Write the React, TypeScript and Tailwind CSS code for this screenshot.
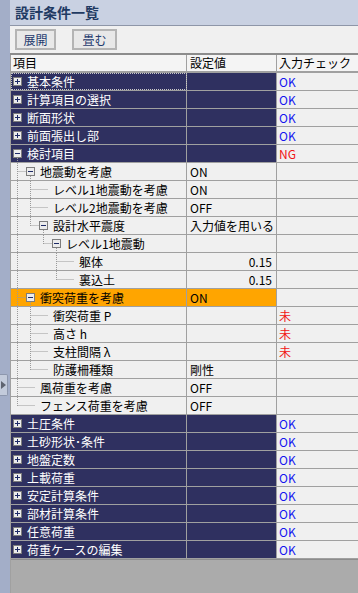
import React from 'react';

type Tone = 'dark' | 'light' | 'orange';

type Row = {
  label: string;
  level: number;
  box?: '+' | '-';
  last?: boolean;
  anc?: boolean[];
  open?: boolean;
  tone: Tone;
  value?: string;
  num?: boolean;
  check?: string;
};

const rows: Row[] = [
  { label: '基本条件', level: 0, box: '+', tone: 'dark', check: 'OK' },
  { label: '計算項目の選択', level: 0, box: '+', tone: 'dark', check: 'OK' },
  { label: '断面形状', level: 0, box: '+', tone: 'dark', check: 'OK' },
  { label: '前面張出し部', level: 0, box: '+', tone: 'dark', check: 'OK' },
  { label: '検討項目', level: 0, box: '-', open: true, tone: 'dark', check: 'NG' },
  { label: '地震動を考慮', level: 1, box: '-', open: true, tone: 'light', value: 'ON' },
  { label: 'レベル1地震動を考慮', level: 2, anc: [true], tone: 'light', value: 'ON' },
  { label: 'レベル2地震動を考慮', level: 2, anc: [true], tone: 'light', value: 'OFF' },
  { label: '設計水平震度', level: 2, box: '-', open: true, last: true, anc: [true], tone: 'light', value: '入力値を用いる' },
  { label: 'レベル1地震動', level: 3, box: '-', open: true, last: true, anc: [true, false], tone: 'light' },
  { label: '躯体', level: 4, anc: [true, false, false], tone: 'light', value: '0.15', num: true },
  { label: '裏込土', level: 4, last: true, anc: [true, false, false], tone: 'light', value: '0.15', num: true },
  { label: '衝突荷重を考慮', level: 1, box: '-', open: true, tone: 'orange', value: 'ON' },
  { label: '衝突荷重 P', level: 2, anc: [true], tone: 'light', check: '未' },
  { label: '高さ h', level: 2, anc: [true], tone: 'light', check: '未' },
  { label: '支柱間隔 λ', level: 2, anc: [true], tone: 'light', check: '未' },
  { label: '防護柵種類', level: 2, last: true, anc: [true], tone: 'light', value: '剛性' },
  { label: '風荷重を考慮', level: 1, tone: 'light', value: 'OFF' },
  { label: 'フェンス荷重を考慮', level: 1, last: true, tone: 'light', value: 'OFF' },
  { label: '土圧条件', level: 0, box: '+', tone: 'dark', check: 'OK' },
  { label: '土砂形状･条件', level: 0, box: '+', tone: 'dark', check: 'OK' },
  { label: '地盤定数', level: 0, box: '+', tone: 'dark', check: 'OK' },
  { label: '上載荷重', level: 0, box: '+', tone: 'dark', check: 'OK' },
  { label: '安定計算条件', level: 0, box: '+', tone: 'dark', check: 'OK' },
  { label: '部材計算条件', level: 0, box: '+', tone: 'dark', check: 'OK' },
  { label: '任意荷重', level: 0, box: '+', tone: 'dark', check: 'OK' },
  { label: '荷重ケースの編集', level: 0, box: '+', tone: 'dark', check: 'OK' },
];

const DOT = '#9a9a9a';

// dotted connectors + expand box, drawn in front of the label
function TreeGlyph({ row }: { row: Row }) {
  const L = row.level;
  const w = 16 + 13 * L;
  const bx = 2 + 13 * L;
  const lines: React.ReactNode[] = [];
  (row.anc || []).forEach((on, i) => {
    const x = 13 * (i + 1) - 7 + 0.5;
    if (on) lines.push(<line key={'a' + i} x1={x} y1={0} x2={x} y2={17} />);
  });
  if (L >= 1) {
    const x = 13 * L - 7 + 0.5;
    lines.push(<line key="v" x1={x} y1={0} x2={x} y2={row.last ? 9 : 17} />);
    lines.push(<line key="h" x1={x} y1={8.5} x2={row.box ? bx : bx + 9} y2={8.5} />);
  }
  if (row.open) {
    const x = bx + 4.5;
    lines.push(<line key="o" x1={x} y1={13} x2={x} y2={17} />);
  }
  return (
    <svg width={w} height={17} className="shrink-0">
      <g stroke={DOT} strokeWidth={1} strokeDasharray="1 1">
        {lines}
      </g>
      {row.box && (
        <g>
          <rect x={bx + 0.5} y={4.5} width={8} height={8} fill="#ececec" stroke="#7d7d7d" />
          <line x1={bx + 2} y1={8.5} x2={bx + 7} y2={8.5} stroke="#1d2a66" />
          {row.box === '+' && <line x1={bx + 4.5} y1={6} x2={bx + 4.5} y2={11} stroke="#1d2a66" />}
        </g>
      )}
    </svg>
  );
}

function TableRow({ row, focus }: { row: Row; focus?: boolean }) {
  const bg =
    row.tone === 'dark' ? 'bg-[#2f3060] text-white' : row.tone === 'orange' ? 'bg-[#ffa500] text-black' : 'bg-[#f0f0f0] text-black';
  const checkColor = row.check === 'OK' ? 'text-[#1414f0]' : 'text-[#f01414]';
  return (
    <div className="flex h-[18px] border-b border-[#a0a0a0]">
      <div
        className={`flex w-[176px] shrink-0 items-center border-r border-[#a0a0a0] ${bg} ${
          focus ? 'outline-1 outline-dotted -outline-offset-1 outline-[#c8c8c8]' : ''
        }`}
      >
        <TreeGlyph row={row} />
        <span className="whitespace-nowrap leading-none">{row.label}</span>
      </div>
      <div
        className={`flex w-[90px] shrink-0 items-center border-r border-[#a0a0a0] px-[3px] ${bg} ${
          row.num ? 'justify-end pr-[4px]' : ''
        }`}
      >
        <span className="whitespace-nowrap leading-none">{row.value}</span>
      </div>
      <div className={`flex flex-1 items-center bg-[#f0f0f0] pl-[2px] ${checkColor}`}>
        <span className="leading-none">{row.check}</span>
      </div>
    </div>
  );
}

export default function App() {
  return (
    <div className="relative flex h-[593px] w-[358px] overflow-hidden font-['Noto_Sans_CJK_JP',sans-serif] text-[12px]">
      {/* left splitter strip */}
      <div className="w-[10px] shrink-0 bg-[#a3aec8]" />
      <div className="absolute left-0 top-[374px] flex h-[22px] w-[8px] items-center justify-center rounded-r-[2px] border border-l-0 border-[#8d97ad] bg-[#c3cbdb]">
        <svg width="5" height="8">
          <path d="M0 0 L5 4 L0 8 Z" fill="#5f6470" />
        </svg>
      </div>

      <div className="flex min-w-0 flex-1 flex-col">
        {/* title */}
        <div className="flex h-[26px] shrink-0 items-center border-b border-[#8e96a8] bg-[#c9d1e2] pl-[5px]">
          <span className="text-[14px] font-bold text-[#1f3a62]">設計条件一覧</span>
        </div>

        {/* toolbar */}
        <div className="flex h-[29px] shrink-0 items-center gap-[16px] border-b-2 border-[#8c8c8c] bg-[#f0f0f0] pl-[5px]">
          <button className="flex h-[21px] w-[41px] items-center justify-center border-2 border-[#b4b4b4] bg-[#e8e8e8] text-[12px] text-[#1f3a6e]">
            展開
          </button>
          <button className="flex h-[21px] w-[45px] items-center justify-center border-2 border-[#b4b4b4] bg-[#e8e8e8] text-[12px] text-[#1f3a6e]">
            畳む
          </button>
        </div>

        {/* grid */}
        <div className="flex flex-1 flex-col border-l border-[#a0a0a0] bg-[#ababab]">
          <div className="flex h-[18px] shrink-0 border-b-2 border-[#a0a0a0] bg-[#f4f4f4] text-black">
            <div className="flex w-[176px] shrink-0 items-center border-r border-[#a0a0a0] pl-[2px]">項目</div>
            <div className="flex w-[90px] shrink-0 items-center border-r border-[#a0a0a0] px-[3px]">設定値</div>
            <div className="flex flex-1 items-center pl-[2px]">入力チェック</div>
          </div>
          {rows.map((r, i) => (
            <TableRow key={i} row={r} focus={i === 0} />
          ))}
          <div className="border-t border-[#8c8c8c]" />
        </div>
      </div>
    </div>
  );
}
